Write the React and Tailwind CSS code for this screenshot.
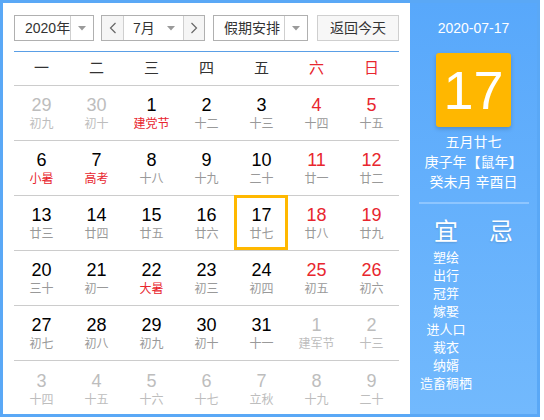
import React from "react";

const rows = [
  [["29","初九","o"],["30","初十","o"],["1","建党节","f"],["2","十二",""],["3","十三",""],["4","十四","w"],["5","十五","w"]],
  [["6","小暑","f"],["7","高考","f"],["8","十八",""],["9","十九",""],["10","二十",""],["11","廿一","w"],["12","廿二","w"]],
  [["13","廿三",""],["14","廿四",""],["15","廿五",""],["16","廿六",""],["17","廿七","s"],["18","廿八","w"],["19","廿九","w"]],
  [["20","三十",""],["21","初一",""],["22","大暑","f"],["23","初三",""],["24","初四",""],["25","初五","w"],["26","初六","w"]],
  [["27","初七",""],["28","初八",""],["29","初九",""],["30","初十",""],["31","十一",""],["1","建军节","o"],["2","十三","o"]],
  [["3","十四","o"],["4","十五","o"],["5","十六","o"],["6","十七","o"],["7","立秋","o"],["8","十九","o"],["9","二十","o"]],
];

const weekdays = ["一","二","三","四","五","六","日"];
const yi = ["塑绘","出行","冠笄","嫁娶","进人口","裁衣","纳婿","造畜稠栖"];

function Tri() {
  return (
    <svg width="8" height="5" viewBox="0 0 8 5">
      <path d="M0 0 L8 0 L4 4.5 Z" fill="#9a9a9a" />
    </svg>
  );
}

function Chev({ dir }) {
  return (
    <svg width="8" height="12" viewBox="0 0 8 12">
      <polyline
        points={dir === "l" ? "6.5,1 1.5,6 6.5,11" : "1.5,1 6.5,6 1.5,11"}
        fill="none"
        stroke="#666"
        strokeWidth="1.2"
      />
    </svg>
  );
}

function Cell({ n, l, t }) {
  let numC = "text-black";
  let lunC = "text-[#999]";
  if (t === "w") numC = "text-[#e8262e]";
  if (t === "f") lunC = "text-[#e8262e]";
  if (t === "o") {
    numC = "text-[#bdbdbd]";
    lunC = "text-[#bdbdbd]";
  }
  return (
    <div className="relative flex flex-col items-center justify-center">
      <div className={`text-[18px] leading-[22px] ${numC}`}>{n}</div>
      <div className={`text-[12px] leading-[16px] ${lunC}`}>{l}</div>
      {t === "s" && (
        <div className="absolute -top-px left-0 right-px bottom-0 border-[3px] border-[#ffb800]"></div>
      )}
    </div>
  );
}

export default function App() {
  return (
    <div className="w-[544px] h-[420px] bg-white font-['Liberation_Sans','Noto_Sans_CJK_SC',sans-serif]">
      <div className="w-[540px] h-[417px] border-[3px] border-[#5aa8f6] flex overflow-hidden">
        {/* Left */}
        <div className="w-[407px] px-[11px] pt-[12px] flex flex-col">
          <div className="flex items-center h-[26px] shrink-0 text-[14px] text-[#333] whitespace-nowrap">
            <div className="flex w-[80px] h-full border border-[#b0b0b0] bg-white">
              <div className="w-[55px] flex items-center pl-[10px]">2020年</div>
              <div className="flex-1 border-l border-[#cfcfcf] flex items-center justify-center">
                <Tri />
              </div>
            </div>
            <div className="ml-[7px] flex w-[104px] h-full border border-[#b0b0b0]">
              <div className="w-[22px] bg-[#f5f5f5] border-r border-[#cfcfcf] flex items-center justify-center">
                <Chev dir="l" />
              </div>
              <div className="w-[59px] flex items-center pl-[9px] pr-[8px] justify-between bg-white">
                <span>7月</span>
                <Tri />
              </div>
              <div className="flex-1 bg-[#f5f5f5] border-l border-[#cfcfcf] flex items-center justify-center">
                <Chev dir="r" />
              </div>
            </div>
            <div className="ml-[8px] flex w-[95px] h-full border border-[#b0b0b0] bg-white">
              <div className="w-[70px] flex items-center pl-[10px]">假期安排</div>
              <div className="flex-1 border-l border-[#cfcfcf] flex items-center justify-center">
                <Tri />
              </div>
            </div>
            <div className="ml-[9px] w-[82px] h-full border border-[#cfcfcf] bg-[#f7f7f7] flex items-center justify-center">
              返回今天
            </div>
          </div>
          <div className="mt-[10px] shrink-0 border-t border-[#5a9fe6]"></div>
          <div className="grid grid-cols-7 h-[34px] shrink-0 border-b border-[#cccccc] items-center text-[15px]">
            {weekdays.map((w, i) => (
              <div key={w} className={`text-center ${i >= 5 ? "text-[#e8262e]" : "text-[#333]"}`}>
                {w}
              </div>
            ))}
          </div>
          {rows.map((r, ri) => (
            <div
              key={ri}
              className={`grid grid-cols-7 h-[55px] shrink-0 ${ri < 5 ? "border-b border-[#cccccc]" : ""}`}
            >
              {r.map((c, ci) => (
                <Cell key={ci} n={c[0]} l={c[1]} t={c[2]} />
              ))}
            </div>
          ))}
        </div>
        {/* Right */}
        <div className="flex-1 bg-linear-to-b from-[#58a8fb] to-[#72b9fd] flex flex-col items-center text-white pt-[15px]">
          <div className="text-[14px] leading-[20px]">2020-07-17</div>
          <div className="mt-[15px] w-[75px] h-[74px] rounded-[3px] bg-[#ffb700] shadow-[0_2px_4px_rgba(0,0,0,0.18)] flex items-center justify-center text-[54px] leading-none">
            17
          </div>
          <div className="mt-[5px] text-[14px] leading-[20px]">五月廿七</div>
          <div className="text-[14px] leading-[20px]">庚子年【鼠年】</div>
          <div className="text-[14px] leading-[20px]">癸未月 辛酉日</div>
          <div className="mt-[10px] w-[110px] h-[2px] bg-[#8ec6ff]"></div>
          <div className="w-[110px] flex mt-[13px]">
            <div className="w-[55px] flex flex-col items-center">
              <div className="text-[24px] leading-[30px] [text-shadow:0_1px_2px_rgba(0,0,0,0.15)]">宜</div>
              <div className="mt-[2px] flex flex-col items-center text-[13px] leading-[18px]">
                {yi.map((y) => (
                  <div key={y}>{y}</div>
                ))}
              </div>
            </div>
            <div className="w-[55px] flex flex-col items-center">
              <div className="text-[24px] leading-[30px] [text-shadow:0_1px_2px_rgba(0,0,0,0.15)]">忌</div>
            </div>
          </div>
        </div>
      </div>
    </div>
  );
}
